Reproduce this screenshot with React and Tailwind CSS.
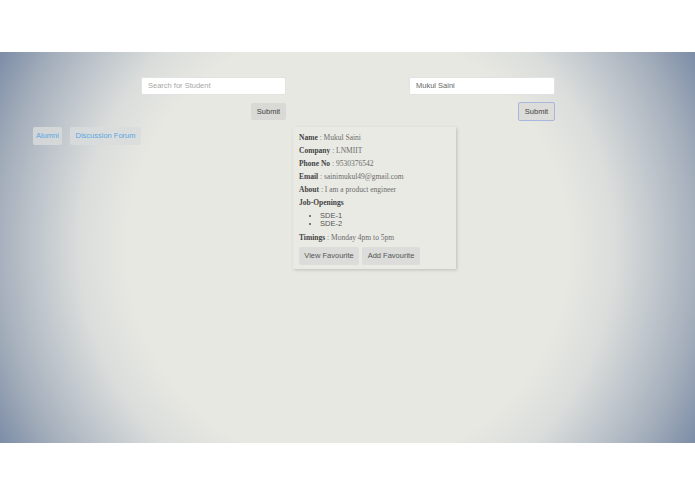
export default function App() {
  const bg = {
    backgroundImage:
      "radial-gradient(circle 400px at 50% 50%, #e8e8e2 0%, #e8e8e2 55%, #dadddb 67%, #bcc3ca 79%, #a4aebb 88%, #7b8ca6 100%)",
  };
  const row = (label, value) => (
    <div className="h-[13px] leading-[13px] whitespace-nowrap">
      <span className="font-bold text-[#444]">{label}</span>
      <span className="text-[#6a6a6a]"> : {value}</span>
    </div>
  );
  return (
    <div className="w-[695px] h-[494px] bg-white" style={{ fontFamily: '"Liberation Sans", Arial, sans-serif' }}>
      <div className="h-[52px]" />
      <div className="h-[391px] w-full" style={bg}>
        {/* search forms */}
        <div className="flex pt-[25px]">
          <div className="ml-[141px] w-[145px] flex flex-col items-end">
            <div className="w-full h-[18px] bg-white border border-[#e2e2e2] rounded-[2px] pl-[6px] text-[7.5px] leading-[16px] text-[#a8a8a8]">
              Search for Student
            </div>
            <div className="mt-[8px] w-[35px] h-[17px] bg-[#d9d9d6] rounded-[2px] text-[7.5px] leading-[17px] text-center text-[#444]">
              Submit
            </div>
          </div>
          <div className="ml-[123px] w-[146px] flex flex-col items-end">
            <div className="w-full h-[18px] bg-white border border-[#e2e2e2] rounded-[2px] pl-[6px] text-[7.5px] leading-[16px] text-[#666]">
              Mukul Saini
            </div>
            <div className="mt-[7px] w-[37px] h-[19px] bg-[#dcdcd8] border border-[#a9b6de] rounded-[2px] text-[7.5px] leading-[17px] text-center text-[#444]">
              Submit
            </div>
          </div>
        </div>
        {/* nav + card */}
        <div className="flex items-start mt-[6px]">
          <div className="ml-[33px] flex gap-[8px]">
            <div className="w-[29px] h-[18px] bg-[#dadcdc]/80 rounded-[2px] text-[7.5px] leading-[18px] text-center text-[#5aa6e2]">
              Alumni
            </div>
            <div className="w-[71px] h-[18px] bg-[#dadcdc]/80 rounded-[2px] text-[7.5px] leading-[18px] text-center text-[#5aa6e2]">
              Discussion Forum
            </div>
          </div>
          <div className="ml-[152px] w-[163px] bg-[#eaeae5] shadow-[1px_1px_3px_rgba(0,0,0,0.18)] pl-[6px] pt-[4px] pb-[4px]">
            <div className="text-[7.5px]" style={{ fontFamily: '"Liberation Serif", "Times New Roman", serif' }}>
              {row("Name", "Mukul Saini")}
              {row("Company", "LNMIIT")}
              {row("Phone No", "9530376542")}
              {row("Email", "sainimukul49@gmail.com")}
              {row("About", "I am a product engineer")}
              <div className="h-[13px] leading-[13px] font-bold text-[#444]">Job-Openings</div>
            </div>
            <ul className="mt-[3px] pl-[21px] list-disc text-[7.5px] leading-[8px] text-[#555]">
              <li>SDE-1</li>
              <li>SDE-2</li>
            </ul>
            <div className="mt-[3px] text-[7.5px]" style={{ fontFamily: '"Liberation Serif", "Times New Roman", serif' }}>
              {row("Timings", "Monday 4pm to 5pm")}
            </div>
            <div className="mt-[3px] flex gap-[3px]">
              <div className="w-[60px] h-[18px] bg-[#dcdcda] rounded-[2px] text-[7.5px] leading-[18px] text-center text-[#555]">
                View Favourite
              </div>
              <div className="w-[58px] h-[18px] bg-[#dcdcda] rounded-[2px] text-[7.5px] leading-[18px] text-center text-[#555]">
                Add Favourite
              </div>
            </div>
          </div>
        </div>
      </div>
    </div>
  );
}
